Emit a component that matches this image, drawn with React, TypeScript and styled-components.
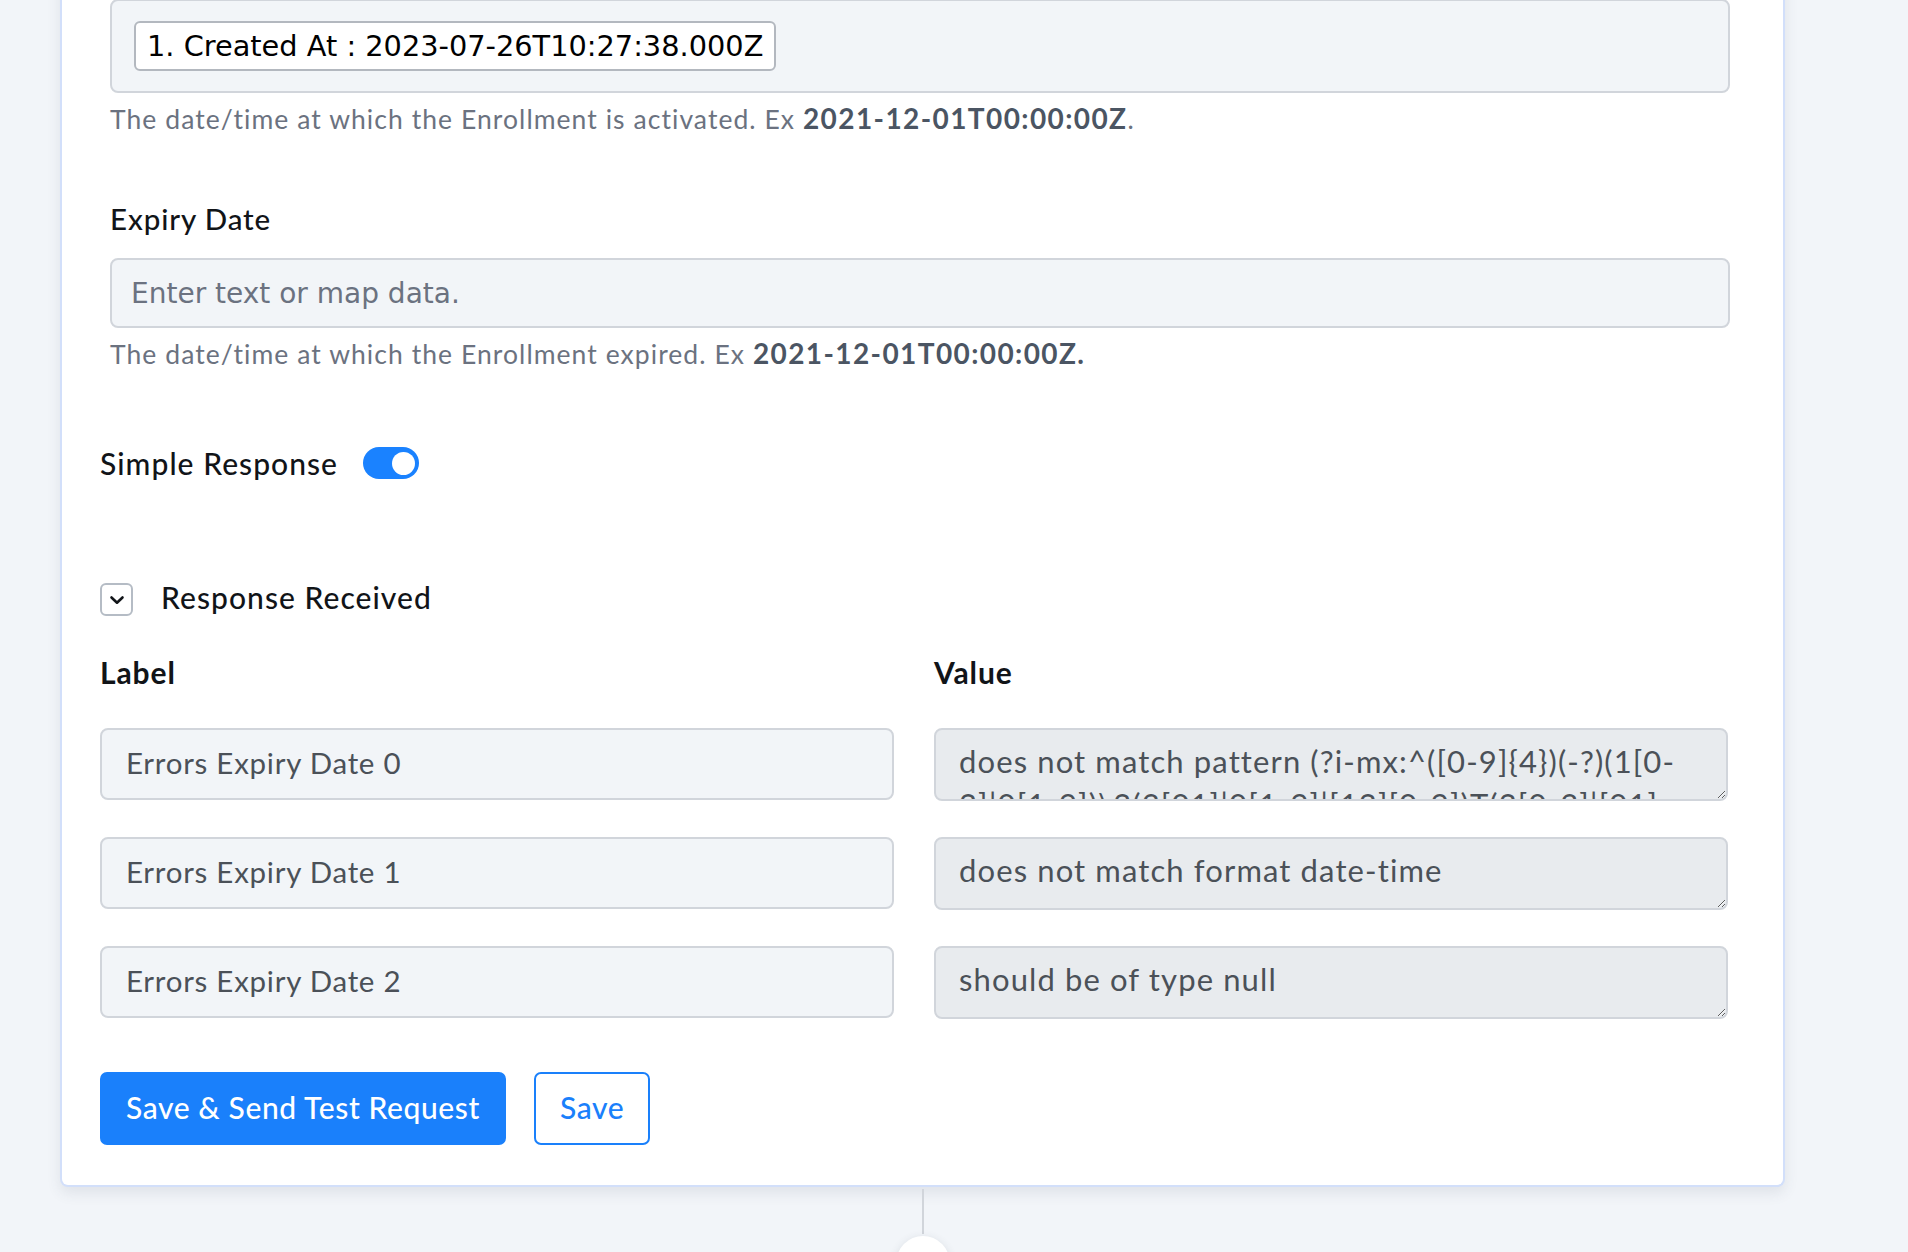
import React from "react";
import styled, { createGlobalStyle } from "styled-components";

const GlobalStyle = createGlobalStyle`
  html, body {
    margin: 0;
    padding: 0;
    background: #f2f5f9;
    overflow: hidden;
  }
  body {
    font-family: Lato, "Open Sans", sans-serif;
    color: #111418;
  }
  * {
    box-sizing: border-box;
  }
`;

const Page = styled.div`
  width: 1725px;
  margin-left: 60px;
  display: flex;
  flex-direction: column;
  align-items: center;
`;

const Card = styled.div`
  align-self: stretch;
  margin-top: -21px;
  padding: 20px 55px 40px 38px;
  background: #ffffff;
  border: 2px solid #d2dffa;
  border-top: none;
  border-radius: 0 0 8px 8px;
  box-shadow: 0 6px 14px rgba(60, 72, 90, 0.1);
`;

const Fields = styled.div`
  margin-left: 10px;
  margin-right: -2px;
`;

const TokenBox = styled.div`
  height: 94px;
  padding: 0 22px;
  display: flex;
  align-items: center;
  background: #f2f5f8;
  border: 2px solid #d1d5db;
  border-radius: 8px;
`;

const Token = styled.span`
  height: 50px;
  padding: 0 11px;
  display: inline-flex;
  align-items: center;
  background: #ffffff;
  border: 2px solid #b3b8bf;
  border-radius: 6px;
  font-family: "DejaVu Sans", Verdana, sans-serif;
  font-size: 28.8px;
  color: #000;
`;

const Help = styled.div`
  height: 36px;
  margin-top: 8px;
  line-height: 36px;
  font-size: 26.5px;
  letter-spacing: 0.04em;
  color: #6b7280;
  white-space: nowrap;

  b {
    line-height: 0;
    color: #4b5563;
    font-size: 28px;
    font-weight: 700;
    letter-spacing: 0.05em;
  }
`;

const FieldLabel = styled.div<{ $gap: number }>`
  height: 36px;
  margin-top: ${(p) => p.$gap}px;
  margin-bottom: 21px;
  line-height: 36px;
  font-size: 29.5px;
  font-weight: 500;
  letter-spacing: 0.03em;
  color: #111418;
`;

const TextInput = styled.div`
  height: 70px;
  padding: 0 19px;
  display: flex;
  align-items: center;
  background: #f2f5f8;
  border: 2px solid #d1d5db;
  border-radius: 8px;
  font-family: "DejaVu Sans", Verdana, sans-serif;
  font-size: 28px;
  color: #6b7280;
`;

const ToggleRow = styled.div`
  margin-top: 73px;
  height: 36px;
  display: flex;
  align-items: center;
  gap: 25px;
  font-size: 30px;
  font-weight: 500;
  letter-spacing: 0.035em;
`;

const Switch = styled.span<{ $on: boolean }>`
  position: relative;
  width: 56px;
  height: 32px;
  border-radius: 16px;
  background: ${(p) => (p.$on ? "#1a82ff" : "#d1d5db")};

  &::after {
    content: "";
    position: absolute;
    top: 4.5px;
    ${(p) => (p.$on ? "right: 4.5px;" : "left: 4.5px;")}
    width: 23px;
    height: 23px;
    border-radius: 50%;
    background: #ffffff;
  }
`;

const Section = styled.div`
  margin-top: 102px;
  height: 33px;
  display: flex;
  align-items: center;
  gap: 28px;
  font-size: 30px;
  font-weight: 500;
  letter-spacing: 0.035em;
`;

const SectionTitle = styled.span`
  margin-bottom: 6px;
`;

const Chevron = styled.span`
  width: 33px;
  height: 33px;
  display: flex;
  align-items: center;
  justify-content: center;
  border: 2px solid #b5bcc5;
  border-radius: 6px;
`;

const Grid = styled.div`
  margin-top: 38px;
  display: grid;
  grid-template-columns: 1fr 1fr;
  column-gap: 40px;
  row-gap: 36px;
  align-items: start;
`;

const ColHead = styled.div`
  height: 36px;
  line-height: 36px;
  margin-bottom: 2px;
  font-size: 30px;
  font-weight: 700;
  letter-spacing: 0.03em;
`;

const LabelBox = styled.div`
  height: 72px;
  padding: 0 24px 4px;
  display: flex;
  align-items: center;
  background: #f2f5f8;
  border: 2px solid #d1d5db;
  border-radius: 8px;
  font-size: 29.5px;
  letter-spacing: 0.025em;
  color: #4b5158;
`;

const ValueArea = styled.textarea`
  display: block;
  width: 100%;
  height: 73px;
  margin: 0;
  padding: 10px 30px 0 23px;
  background: #e8ebee;
  border: 2px solid #d1d5db;
  border-radius: 8px;
  font-family: Lato, "Open Sans", sans-serif;
  font-size: 31px;
  line-height: 43px;
  letter-spacing: 0.036em;
  color: #4b5158;
  overflow: hidden;
  resize: vertical;
  outline: none;
`;

const Actions = styled.div`
  margin-top: 53px;
  display: flex;
  gap: 28px;
`;

const Button = styled.button<{ $primary?: boolean }>`
  height: 73px;
  padding: 0 24px 4px;
  border-radius: 7px;
  border: 2px solid #1a80fb;
  background: ${(p) => (p.$primary ? "#1a80fb" : "#ffffff")};
  color: ${(p) => (p.$primary ? "#ffffff" : "#1a80fb")};
  font-family: Lato, "Open Sans", sans-serif;
  font-size: 30px;
  font-weight: 500;
  letter-spacing: 0.02em;
  cursor: pointer;
`;

const Stem = styled.div`
  width: 2px;
  height: 45px;
  margin-top: 2px;
  background: #d1d5db;
`;

const Node = styled.div`
  width: 54px;
  height: 54px;
  margin-top: 2px;
  border-radius: 50%;
  background: #ffffff;
  box-shadow: 0 2px 8px rgba(60, 72, 90, 0.15);
`;

const PATTERN =
  "does not match pattern (?i-mx:^([0-9]{4})(-?)(1[0-2]|0[1-9])\\2(3[01]|0[1-9]|[12][0-9])T(2[0-3]|[01][0-9]):?([0-5][0-9]):?([0-5][0-9])(\\.[0-9]+)?(Z|[+-](?:2[0-3]|[01][0-9]):?[0-5][0-9])?$)";

const rows = [
  { label: "Errors Expiry Date 0", value: PATTERN },
  { label: "Errors Expiry Date 1", value: "does not match format date-time" },
  { label: "Errors Expiry Date 2", value: "should be of type null" },
];

export default function App() {
  return (
    <>
      <GlobalStyle />
      <Page>
        <Card>
          <Fields>
            <TokenBox>
              <Token>1. Created At : 2023-07-26T10:27:38.000Z</Token>
            </TokenBox>
            <Help>
              The date/time at which the Enrollment is activated. Ex{" "}
              <b>2021-12-01T00:00:00Z</b>.
            </Help>

            <FieldLabel $gap={64}>Expiry Date</FieldLabel>
            <TextInput>Enter text or map data.</TextInput>
            <Help>
              The date/time at which the Enrollment expired. Ex{" "}
              <b>2021-12-01T00:00:00Z.</b>
            </Help>
          </Fields>

          <ToggleRow>
            Simple Response
            <Switch $on />
          </ToggleRow>

          <Section>
            <Chevron>
              <svg width="16" height="10" viewBox="0 0 16 10" fill="none">
                <path
                  d="M2.5 2.5l5.5 5.2 5.5-5.2"
                  stroke="#111418"
                  strokeWidth="2.6"
                  strokeLinecap="round"
                  strokeLinejoin="round"
                />
              </svg>
            </Chevron>
            <SectionTitle>Response Received</SectionTitle>
          </Section>

          <Grid>
            <ColHead>Label</ColHead>
            <ColHead>Value</ColHead>
            {rows.map((r) => (
              <React.Fragment key={r.label}>
                <LabelBox>{r.label}</LabelBox>
                <ValueArea readOnly value={r.value} rows={1} />
              </React.Fragment>
            ))}
          </Grid>

          <Actions>
            <Button $primary>Save &amp; Send Test Request</Button>
            <Button>Save</Button>
          </Actions>
        </Card>
        <Stem />
        <Node />
      </Page>
    </>
  );
}
